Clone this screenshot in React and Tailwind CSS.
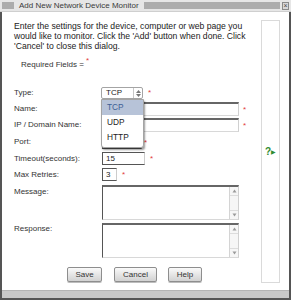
import React from 'react';

const Star = ({ className }) => (
    <span className={`text-[#e23b3b] text-[8px] leading-none ${className}`}>*</span>
);

const Row = ({ label, className, align = 'items-center', labelClass = '', children }) => (
    <div className={`flex ${align} ${className}`}>
        <div className={`w-[99px] shrink-0 pl-[12px] text-[8px] leading-[10px] text-[#333] ${labelClass}`}>{label}</div>
        {children}
    </div>
);

const Scrollbar = () => (
    <div className="flex w-[9px] shrink-0 flex-col justify-between border-l border-[#d4d4d4] bg-[#f6f6f6]">
        <div className="flex h-[9px] items-center justify-center border-b border-[#dcdcdc]">
            <svg width="5" height="4" viewBox="0 0 5 4"><path d="M2.5 0.5 L4.5 3.5 L0.5 3.5 Z" fill="#9a9a9a" /></svg>
        </div>
        <div className="flex h-[9px] items-center justify-center border-t border-[#dcdcdc]">
            <svg width="5" height="4" viewBox="0 0 5 4"><path d="M0.5 0.5 L4.5 0.5 L2.5 3.5 Z" fill="#9a9a9a" /></svg>
        </div>
    </div>
);

const TextBox = ({ className }) => (
    <div className={`flex border-l border-t-2 border-r border-b border-l-[#555] border-t-[#666] border-r-[#d0d0d0] border-b-[#d8d8d8] bg-white ${className}`}>
        <textarea readOnly className="flex-1 resize-none bg-transparent outline-none" />
        <Scrollbar />
    </div>
);

const Btn = ({ children, className }) => (
    <button className={`h-[15px] rounded-[2px] border border-[#8e8e8e] bg-gradient-to-b from-[#fafafa] to-[#d2d2d2] text-[8px] leading-none text-[#333] shadow-[0_1px_0_#bdbdbd] ${className}`}>
        {children}
    </button>
);

const App = () => {
    return (
        <div className="flex h-[300px] w-[291px] flex-col overflow-hidden bg-white font-['Liberation_Sans',Arial,sans-serif]">
            {/* title bar */}
            <div className="flex h-[12px] shrink-0 items-center border-b border-[#cfcfcf] bg-[#e6e6e6]">
                <div className="ml-[2px] h-[7px] w-[12px] bg-[radial-gradient(circle,#a8a8a8_0.7px,transparent_0.8px)] bg-[length:2px_2px]" />
                <span className="ml-[5px] text-[8px] leading-none text-[#3a3a3a] whitespace-nowrap">Add New Network Device Monitor</span>
                <div className="ml-[5px] mr-[2px] h-[7px] flex-1 bg-[radial-gradient(circle,#a8a8a8_0.7px,transparent_0.8px)] bg-[length:2px_2px]" />
                <div className="mr-[2px] flex h-[8px] w-[7px] items-center justify-center border border-[#8a8a8a] bg-[#d8d8d8] text-[7px] leading-none text-[#444]">×</div>
            </div>

            {/* frame */}
            <div className="flex flex-1 flex-col border-x-2 border-b-2 border-[#555]">
                <div className="flex flex-1">
                    {/* main column */}
                    <div className="flex w-[259px] flex-col">
                        <p className="mt-[9px] pl-[12px] pr-[6px] text-[8.65px] leading-[10px] text-[#222]">
                            Enter the settings for the device, computer or web page you would like to monitor. Click the 'Add' button when done. Click 'Cancel' to close this dialog.
                        </p>

                        <div className="mt-[9px] flex pl-[19px] text-[8px] leading-[10px] text-[#333]">
                            Required Fields =<Star className="ml-[2px] -mt-[3px]" />
                        </div>

                        <Row label="Type:" className="mt-[17px] h-[12px]">
                            <div className="relative">
                                <div className="flex h-[12px] w-[42px] items-center rounded-[2px] border border-[#a4a4a4] bg-white">
                                    <span className="flex-1 pl-[4px] text-[8px] leading-none text-[#222]">TCP</span>
                                    <div className="flex h-full w-[9px] flex-col items-center justify-center gap-[1px] border-l border-[#c8c8c8]">
                                        <svg width="5" height="3" viewBox="0 0 5 3"><path d="M2.5 0 L5 3 L0 3 Z" fill="#777" /></svg>
                                        <svg width="5" height="3" viewBox="0 0 5 3"><path d="M0 0 L5 0 L2.5 3 Z" fill="#777" /></svg>
                                    </div>
                                </div>
                                {/* open dropdown */}
                                <div className="absolute left-0 top-[12px] z-10 h-[49px] w-[43px] rounded-b-[3px] border border-[#a4a4a4] bg-white shadow-[1px_2px_2px_rgba(0,0,0,0.4)]">
                                    <div className="flex h-[15px] items-center bg-[#b7c3d8] pl-[5px] text-[8.3px] leading-none text-[#3d5f95]">TCP</div>
                                    <div className="flex h-[15px] items-center pl-[5px] text-[8.3px] leading-none text-[#222]">UDP</div>
                                    <div className="flex h-[15px] items-center pl-[5px] text-[8.3px] leading-none text-[#222]">HTTP</div>
                                </div>
                            </div>
                            <Star className="ml-[5px] self-start mt-[2px]" />
                        </Row>

                        <Row label="Name:" className="mt-[3px] h-[14px]">
                            <input readOnly className="h-[14px] w-[138px] border border-t-2 border-l-[#555] border-t-[#666] border-r-[#d0d0d0] border-b-[#d8d8d8] bg-white outline-none" />
                            <Star className="ml-[4px] self-start mt-[4px]" />
                        </Row>

                        <Row label="IP / Domain Name:" className="mt-[2px] h-[14px]">
                            <input readOnly className="h-[14px] w-[138px] border border-t-2 border-l-[#555] border-t-[#666] border-r-[#d0d0d0] border-b-[#d8d8d8] bg-white outline-none" />
                            <Star className="ml-[4px] self-start mt-[4px]" />
                        </Row>

                        <Row label="Port:" className="mt-[3px] h-[14px]">
                            <input readOnly className="ml-[1px] h-[14px] w-[40px] border border-[#555] border-r-[#ccc] bg-white outline-none" />
                            <Star className="ml-[2px] self-start mt-[4px]" />
                        </Row>

                        <Row label="Timeout(seconds):" className="mt-[3px] h-[13px]">
                            <input readOnly value="15" className="ml-[1px] h-[13px] w-[43px] border border-[#555] border-r-[#ccc] bg-white pl-[3px] text-[8px] text-[#222] outline-none" />
                            <Star className="ml-[5px] self-start mt-[3px]" />
                        </Row>

                        <Row label="Max Retries:" className="mt-[3px] h-[13px]">
                            <input readOnly value="3" className="ml-[1px] h-[13px] w-[15px] border border-[#555] border-r-[#ccc] bg-white pl-[3px] text-[8px] text-[#222] outline-none" />
                            <Star className="ml-[5px] self-start mt-[3px]" />
                        </Row>

                        <Row label="Message:" className="mt-[4px]" align="items-start" labelClass="pt-[2px]">
                            <TextBox className="ml-[1px] h-[35px] w-[137px]" />
                        </Row>

                        <Row label="Response:" className="mt-[3px]" align="items-start" labelClass="pt-[1px]">
                            <TextBox className="ml-[1px] h-[35px] w-[137px]" />
                        </Row>

                        <div className="mt-[9px] flex pl-[65px]">
                            <Btn className="w-[35px]">Save</Btn>
                            <Btn className="ml-[12px] w-[43px]">Cancel</Btn>
                            <Btn className="ml-[11px] w-[34px]">Help</Btn>
                        </div>
                    </div>

                    {/* help side panel */}
                    <div className="mb-[7px] mt-[8px] flex w-[19px] items-center justify-center border border-[#dadada]">
                        <span className="text-[10px] font-bold leading-none text-[#2e8b2e]">?</span>
                        <span className="text-[6px] leading-none text-[#2e8b2e]">▶</span>
                    </div>
                </div>

                {/* bottom bar */}
                <div className="h-[8px] shrink-0 border-t border-[#b4b4b4] bg-[#c8c8c8]" />
            </div>
        </div>
    );
};

export default App;
